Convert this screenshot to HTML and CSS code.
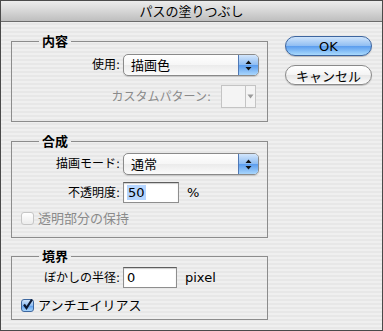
FILE: index.html
```html
<!DOCTYPE html>
<html lang="ja">
<head>
  <meta charset="UTF-8">
  <title>パスの塗りつぶし</title>
  <link rel="stylesheet" href="styles.css">
</head>
<body>
  <div class="window">
    <div class="titlebar">パスの塗りつぶし</div>

    <div class="main">
      <div class="groups">

        <!-- 内容 -->
        <fieldset class="group group-content">
          <legend>内容</legend>
          <div class="row">
            <span class="label">使用:</span>
            <div class="popup">
              <span class="value">描画色</span>
              <span class="cap">
                <svg width="7" height="11" viewBox="0 0 7 11"><path d="M3.5 0.5 L6.5 4 L0.5 4 Z M0.5 7 L6.5 7 L3.5 10.5 Z" fill="#111"/></svg>
              </span>
            </div>
          </div>
          <div class="row row-end row-pattern">
            <span class="label-plain disabled">カスタムパターン:</span>
            <div class="pattern">
              <span class="swatch"></span>
              <span class="arrow">
                <svg width="7" height="5" viewBox="0 0 7 5"><path d="M0.5 0.5 L6.5 0.5 L3.5 4.5 Z" fill="#9a9a9a"/></svg>
              </span>
            </div>
          </div>
        </fieldset>

        <!-- 合成 -->
        <fieldset class="group group-blend">
          <legend>合成</legend>
          <div class="row">
            <span class="label">描画モード:</span>
            <div class="popup">
              <span class="value">通常</span>
              <span class="cap">
                <svg width="7" height="11" viewBox="0 0 7 11"><path d="M3.5 0.5 L6.5 4 L0.5 4 Z M0.5 7 L6.5 7 L3.5 10.5 Z" fill="#111"/></svg>
              </span>
            </div>
          </div>
          <div class="row row-field">
            <span class="label">不透明度:</span>
            <div class="field field-opacity"><span class="sel">50</span></div>
            <span class="unit">%</span>
          </div>
          <div class="check-row disabled">
            <span class="checkbox"></span>
            <span>透明部分の保持</span>
          </div>
        </fieldset>

        <!-- 境界 -->
        <fieldset class="group group-edge">
          <legend>境界</legend>
          <div class="row row-field">
            <span class="label">ぼかしの半径:</span>
            <div class="field field-feather">0</div>
            <span class="unit">pixel</span>
          </div>
          <div class="check-row">
            <span class="checkbox checked">
              <svg width="13" height="13" viewBox="0 0 13 13"><path d="M3 6.5 L5.5 10 L11 1.5" fill="none" stroke="#0d1a33" stroke-width="2.2"/></svg>
            </span>
            <span>アンチエイリアス</span>
          </div>
        </fieldset>

      </div>

      <div class="buttons">
        <button class="btn btn-default">OK</button>
        <button class="btn">キャンセル</button>
      </div>
    </div>
  </div>
</body>
</html>
```

FILE: styles.css
```css
body {
  margin: 0;
  font-family: "DejaVu Sans", "Noto Sans CJK JP", sans-serif;
  font-size: 12px;
  line-height: 16px;
  color: #000;
}

.window {
  width: 383px;
  height: 331px;
  box-sizing: border-box;
  border: 1px solid #4a4a4a;
  background: repeating-linear-gradient(#efefef 0 2px, #e7e7e7 2px 4px);
  overflow: hidden;
}

.titlebar {
  height: 20px;
  line-height: 20px;
  text-align: center;
  font-family: "Noto Sans CJK JP", sans-serif;
  font-size: 13px;
  background: linear-gradient(#ececec, #d6d6d6 50%, #bebebe);
  border-bottom: 1px solid #6b6b6b;
}

.main {
  display: flex;
  gap: 17px;
  padding: 11px 0 0 10px;
}

.groups {
  width: 257px;
  display: flex;
  flex-direction: column;
  gap: 11px;
}

/* グループ枠 */
.group {
  margin: 0;
  padding: 5px 8px 13px 9px;
  border: 1px solid #8c8c8c;
  min-width: 0;
}

.group legend {
  margin-left: 18px;
  padding: 0 3px;
  height: 16px;
  line-height: 16px;
  font-family: "Noto Sans CJK JP", sans-serif;
  font-weight: bold;
  font-size: 13px;
}

.group-blend {
  padding-top: 4px;
  padding-bottom: 11px;
}

.group-edge {
  margin-top: -1px;
  padding-top: 3px;
  padding-bottom: 6px;
}

.row {
  display: flex;
  align-items: center;
  gap: 3px;
}

.row-end {
  justify-content: flex-end;
}

.label {
  width: 99px;
  text-align: right;
  white-space: nowrap;
}

.disabled {
  color: #8a8a8a;
}

/* ポップアップメニュー */
.popup {
  width: 136px;
  height: 22px;
  box-sizing: border-box;
  display: flex;
  border: 1px solid #8a8a8a;
  border-radius: 5px;
  background: linear-gradient(#ffffff, #f6f6f6 50%, #ebebeb 51%, #fbfbfb);
  box-shadow: 0 1px 1px rgba(0, 0, 0, 0.15);
}

.popup .value {
  flex: 1;
  padding-left: 7px;
  line-height: 20px;
  font-family: "Noto Sans CJK JP", sans-serif;
  font-size: 13px;
}

.popup .cap {
  width: 19px;
  display: flex;
  align-items: center;
  justify-content: center;
  border-left: 1px solid #4f78b5;
  border-radius: 0 4px 4px 0;
  background: linear-gradient(#d3e6fc, #8dbcf2 50%, #5a9cee 51%, #a9d6fc);
}

/* カスタムパターン */
.row-pattern {
  margin-top: 9px;
  gap: 10px;
}

.pattern {
  display: flex;
  width: 35px;
  height: 23px;
  margin-right: 3px;
  box-sizing: border-box;
  border: 1px solid #c4c4c4;
  background: #f4f4f4;
}

.pattern .swatch {
  flex: 1;
  border-right: 1px solid #c4c4c4;
}

.pattern .arrow {
  width: 9px;
  display: flex;
  align-items: center;
  justify-content: center;
}

/* テキスト入力 */
.row-field {
  margin-top: 7px;
}

.group-edge .row-field {
  margin-top: 0;
}

.field {
  height: 21px;
  box-sizing: border-box;
  padding: 0 3px;
  line-height: 19px;
  font-size: 13px;
  background: #fff;
  border: 1px solid #8e8e8e;
  border-top-color: #5e5e5e;
  box-shadow: inset 0 1px 1px rgba(0, 0, 0, 0.2);
}

.field-opacity {
  width: 56px;
}

.field-feather {
  width: 54px;
}

.sel {
  background: #b5d5ff;
  padding: 0 1px;
}

.unit {
  margin-left: 5px;
  font-size: 13px;
}

/* チェックボックス */
.check-row {
  display: flex;
  align-items: center;
  gap: 4px;
  height: 16px;
  margin-top: 7px;
  font-family: "Noto Sans CJK JP", sans-serif;
  font-size: 13px;
}

.group-edge .check-row {
  margin-top: 9px;
}

.checkbox {
  width: 13px;
  height: 13px;
  box-sizing: border-box;
  border: 1px solid #a8a8a8;
  border-radius: 3px;
  background: linear-gradient(#ffffff, #ececec);
}

.check-row.disabled .checkbox {
  border-color: #c6c6c6;
}

.checkbox.checked {
  position: relative;
  border-color: #3e679f;
  background: linear-gradient(#cfe4fb, #8dbcf2 50%, #5a9cee 51%, #a9d6fc);
}

.checkbox.checked svg {
  position: absolute;
  left: -1px;
  top: -2px;
}

/* ボタン */
.buttons {
  display: flex;
  flex-direction: column;
  gap: 9px;
  margin-top: 3px;
}

.btn {
  width: 87px;
  height: 20px;
  padding: 0;
  font-family: "DejaVu Sans", "Noto Sans CJK JP", sans-serif;
  font-size: 13px;
  color: #000;
  border: 1px solid #8a8a8a;
  border-radius: 10px;
  background: linear-gradient(#ffffff, #f4f4f4 50%, #e6e6e6 51%, #fbfbfb);
  box-shadow: 0 1px 1px rgba(0, 0, 0, 0.2);
}

.btn-default {
  border-color: #3d659f;
  background: linear-gradient(#cfe4fb, #8fbdf2 50%, #5a9cee 51%, #a9dafd);
}
```
